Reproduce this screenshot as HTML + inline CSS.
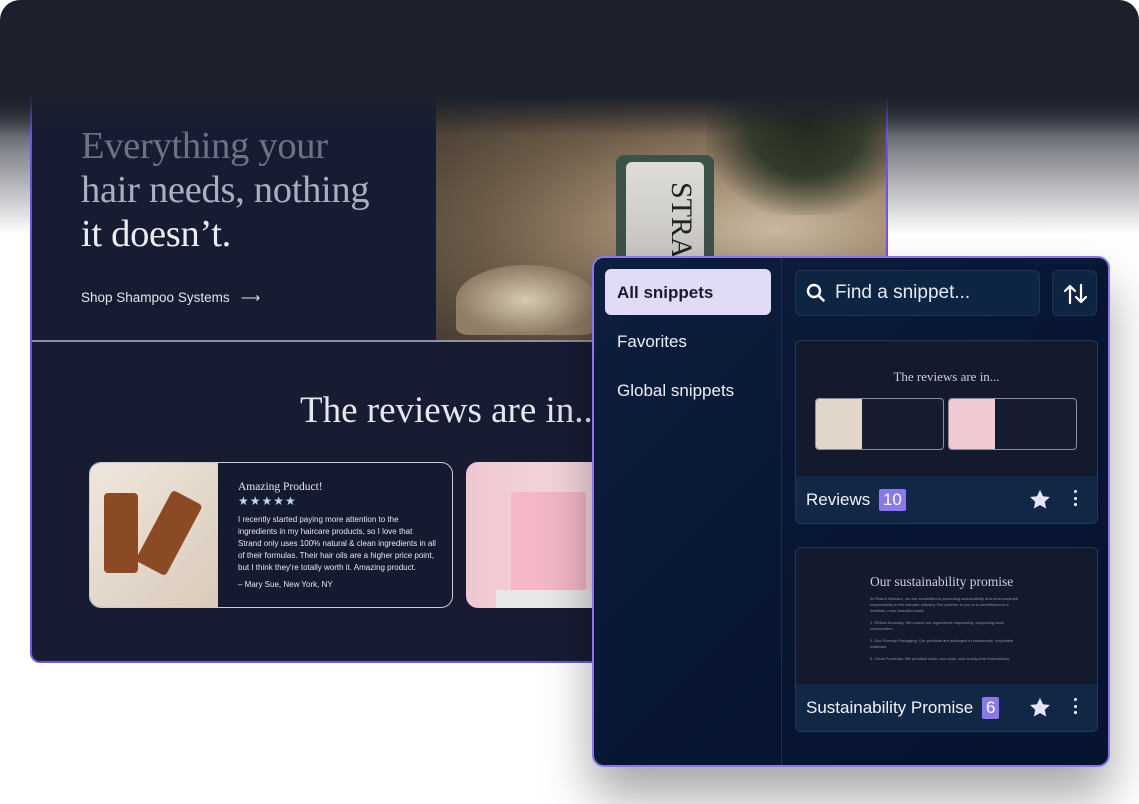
<!DOCTYPE html>
<html><head><meta charset="utf-8"><style>
*{box-sizing:border-box;margin:0;padding:0}
body{width:1139px;height:804px;overflow:hidden;background:#fff;position:relative;font-family:"Liberation Sans",sans-serif}
.top{position:absolute;left:0;top:0;width:1139px;height:240px;border-radius:20px 20px 0 0;background:linear-gradient(to bottom,#1b202b 0,#1b202b 95px,rgba(27,32,43,0.55) 150px,rgba(255,255,255,0) 235px)}
.site{position:absolute;left:30px;top:95px;width:858px;height:568px;background:#181c33;border-left:2px solid #6d55e0;border-right:2px solid #6d55e0;border-bottom:2px solid #6d55e0;border-radius:0 0 10px 10px;overflow:hidden}
.fade{position:absolute;left:0;top:95px;width:1139px;height:40px;background:linear-gradient(#1b202b,rgba(27,32,43,0))}
.hero{position:absolute;left:0;top:0;width:856px;height:247px;border-bottom:2px solid #8d92a6}
.h1{position:absolute;left:49px;top:29px;font-family:"Liberation Serif",serif;font-size:38.5px;line-height:44px;letter-spacing:-0.3px}
.photo{position:absolute;left:404px;top:0;width:452px;height:245px;background:radial-gradient(ellipse at 75% 55%,#c9b9a1 0,#a08a70 30%,#6d5c49 60%,#3e352c 100%)}
.bottle{position:absolute;left:180px;top:60px;width:98px;height:190px;background:#3d5149;border-radius:8px}
.label{position:absolute;left:10px;top:7px;width:78px;height:160px;background:linear-gradient(#dedcd8,#b8b5b0);border-radius:6px}
.leaves{position:absolute;left:270px;top:0;width:182px;height:120px;background:radial-gradient(ellipse at 55% 25%,#232a1f 0,#343b2b 40%,rgba(90,90,70,0) 75%)}
.rock{position:absolute;left:20px;top:170px;width:140px;height:70px;background:radial-gradient(ellipse,#d6c9b2,#8f7d66 70%);border-radius:50% 50% 10% 10%}
.shop{position:absolute;left:49px;top:195px;color:#e2e4ea;font-size:13.5px}
.rev{position:absolute;left:268px;top:294px;font-family:"Liberation Serif",serif;font-size:37px;color:#e6e8ee}
.card{position:absolute;left:57px;top:367px;width:364px;height:146px;border:1.5px solid #c9ccd8;border-radius:12px;overflow:hidden;background:#141a30}
.cimg{position:absolute;left:0;top:0;width:128px;height:146px;background:linear-gradient(135deg,#efe6dc,#d9cbbb)}
.b1{position:absolute;left:14px;top:30px;width:34px;height:80px;background:#8a4a24;border-radius:4px}
.b2{position:absolute;left:62px;top:30px;width:34px;height:80px;background:#8a4a24;border-radius:4px;transform:rotate(28deg)}
.ct{position:absolute;left:148px;top:18px;color:#e7e9ee}
.card2{position:absolute;left:434px;top:367px;width:160px;height:146px;border-radius:12px;overflow:hidden;background:linear-gradient(90deg,#f0c7d0,#f7dde3)}
.panel{position:absolute;left:592px;top:256px;width:518px;height:511px;border:2px solid #8a75f0;border-radius:12px;background:linear-gradient(135deg,#0d1f3e,#071530 60%,#061430);box-shadow:0 30px 50px rgba(0,0,0,0.35);overflow:hidden}
.div{position:absolute;left:187px;top:0;width:1px;height:100%;background:#1e3150}
.nav{position:absolute;left:11px;width:166px;height:46px;font-size:17px;color:#eef0f6;padding:14px 12px;font-family:"Liberation Sans",sans-serif}
.sel{background:#e0dcf7;color:#1a1b2e;font-weight:bold;border-radius:6px}
.search{position:absolute;left:201px;top:12px;width:245px;height:46px;border:1px solid #1f3354;border-radius:6px;background:#0e2443}
.sort{position:absolute;left:458px;top:12px;width:45px;height:46px;border:1px solid #1f3354;border-radius:6px;background:#0e2443}
.sc{position:absolute;left:201px;width:303px;border:1px solid #24365a;border-radius:6px;overflow:hidden;background:#141a2e}
.foot{position:absolute;left:0;bottom:0;width:100%;height:47px;background:#112745;color:#f0f2f8;font-size:17px;padding:13px 10px}
.badge{display:inline-block;background:#8b78ee;color:#fff;padding:1px 4px;border-radius:2px;margin-left:4px;font-size:17px}
.star{position:absolute;right:46px;top:13px}
.dots{position:absolute;right:20px;top:14px;width:3px}
.dots i{display:block;width:3px;height:3px;background:#fff;border-radius:50%;margin-bottom:3.5px}
.tiny{font-size:4px;color:#8e93a3;line-height:6px}
</style></head><body>
<div class="top"></div>
<div class="site">
 <div class="hero">
  <div class="h1"><span style="color:#6d7385">Everything your</span><br><span style="color:#a8afc0">hair needs, nothing</span><br><span style="color:#eceef4">it doesn’t.</span></div>
  <div class="shop">Shop Shampoo Systems &nbsp;&nbsp;⟶</div>
  <div class="photo"><div class="rock"></div><div class="bottle"><div class="label"><div style="position:absolute;right:6px;top:20px;writing-mode:vertical-rl;font-family:'Liberation Serif',serif;font-size:30px;color:#222">STRAND</div></div></div><div class="leaves"></div></div>
 </div>
 <div class="rev">The reviews are in...</div>
 <div class="card"><div class="cimg"><div class="b1"></div><div class="b2"></div></div>
  <div class="ct"><div style="font-family:'Liberation Serif',serif;font-size:11.5px">Amazing Product!</div>
  <div style="color:#b9dbe6;font-size:12px;letter-spacing:1px;margin-top:1px">★★★★★</div>
  <div style="font-size:8px;line-height:12px;margin-top:6px;width:200px">I recently started paying more attention to the ingredients in my haircare products, so I love that Strand only uses 100% natural &amp; clean ingredients in all of their formulas. Their hair oils are a higher price point, but I think they're totally worth it. Amazing product.</div>
  <div style="font-size:8px;margin-top:6px">– Mary Sue, New York, NY</div></div>
 </div>
 <div class="card2"><div style="position:absolute;left:45px;top:30px;width:75px;height:100px;background:#f3b7c6;border-radius:4px"></div><div style="position:absolute;left:30px;top:128px;width:110px;height:18px;background:#e8e8ea"></div></div>
</div>
<div class="fade"></div>
<div class="panel">
 <div class="div"></div>
 <div class="nav sel" style="top:11px">All snippets</div>
 <div class="nav" style="top:60px">Favorites</div>
 <div class="nav" style="top:109px">Global snippets</div>
 <div class="search"><svg width="20" height="20" viewBox="0 0 20 20" style="position:absolute;left:10px;top:12px"><circle cx="8" cy="8" r="6" fill="none" stroke="#fff" stroke-width="2.4"/><path d="M12.5 12.5L17.5 17.5" stroke="#fff" stroke-width="2.6" stroke-linecap="round"/></svg><span style="position:absolute;left:39px;top:11px;color:#e6e9f2;font-size:19px">Find a snippet...</span></div>
 <div class="sort"><svg width="26" height="22" viewBox="0 0 26 22" style="position:absolute;left:10px;top:12px"><path d="M7 20V3M2 8l5-5 5 5M18 2v17M13 14l5 5 5-5" fill="none" stroke="#fff" stroke-width="2.2" stroke-linecap="round" stroke-linejoin="round"/></svg></div>
 <div class="sc" style="top:82px;height:184px">
  <div style="position:absolute;top:28px;width:100%;text-align:center;font-family:'Liberation Serif',serif;font-size:13px;color:#cdd0da">The reviews are in...</div>
  <div style="position:absolute;left:19px;top:57px;width:129px;height:52px;border:1px solid #8a8fa0;border-radius:4px;overflow:hidden;background:#161c30"><div style="width:46px;height:52px;background:#e2d6c8"></div></div>
  <div style="position:absolute;left:152px;top:57px;width:129px;height:52px;border:1px solid #8a8fa0;border-radius:4px;overflow:hidden;background:#161c30"><div style="width:46px;height:52px;background:#f1c9d3"></div></div>
  <div class="foot">Reviews <span class="badge">10</span><svg class="star" width="22" height="21" viewBox="0 0 24 23"><path d="M12 1l3.3 7 7.6.8-5.7 5.1 1.6 7.5L12 17.6 5.2 21.4l1.6-7.5L1.1 8.8 8.7 8z" fill="#e6e3fb"/></svg><div class="dots"><i></i><i></i><i></i></div></div>
 </div>
 <div class="sc" style="top:289px;height:185px">
  <div style="position:absolute;left:74px;top:26px;font-family:'Liberation Serif',serif;font-size:13.5px;color:#cdd0da">Our sustainability promise</div>
  <div class="tiny" style="position:absolute;left:74px;top:48px;width:152px">At Strand Haircare, we are committed to promoting sustainability and environmental responsibility in the haircare industry. Our promise to you is a commitment to a healthier, more beautiful world.<br><br>1. Ethical Sourcing: We source our ingredients responsibly, supporting local communities.<br><br>2. Eco-Friendly Packaging: Our products are packaged in sustainable, recyclable materials.<br><br>3. Clean Formulas: We prioritize clean, non-toxic, and cruelty-free formulations.</div>
  <div class="foot">Sustainability Promise <span class="badge">6</span><svg class="star" width="22" height="21" viewBox="0 0 24 23"><path d="M12 1l3.3 7 7.6.8-5.7 5.1 1.6 7.5L12 17.6 5.2 21.4l1.6-7.5L1.1 8.8 8.7 8z" fill="#e6e3fb"/></svg><div class="dots"><i></i><i></i><i></i></div></div>
 </div>
</div>
</body></html>
